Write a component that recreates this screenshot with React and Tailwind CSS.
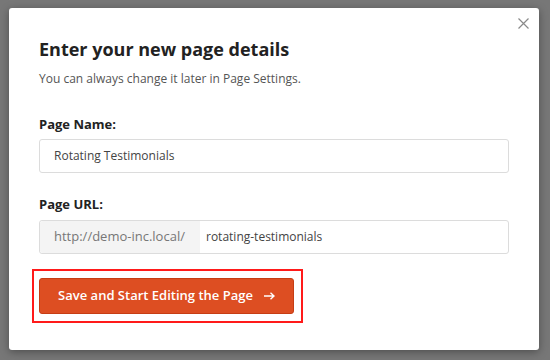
import React from 'react';

const App = () => {
    return (
        <div
            className="w-[550px] h-[360px] bg-[#777777] overflow-hidden pt-[8px] pl-[9px]"
            style={{ fontFamily: '"Open Sans", "Liberation Sans", sans-serif' }}
        >
            <div className="relative w-[530px] h-[342px] bg-white rounded-[3px] shadow-[0_2px_8px_rgba(0,0,0,0.35)] pt-[29px] px-[30px]">
                <button className="absolute right-[10px] top-[10px] text-[#8a8a8a]">
                    <svg width="11" height="11" viewBox="0 0 11 11" fill="none" stroke="currentColor" strokeWidth="1.2" className="block">
                        <path d="M0.5 0.5L10.5 10.5M10.5 0.5L0.5 10.5" />
                    </svg>
                </button>

                <h1 className="text-[18px] leading-[24px] font-bold text-[#222]">
                    Enter your new page details
                </h1>
                <p className="text-[12px] leading-[18px] text-[#555] mt-[9px]">
                    You can always change it later in Page Settings.
                </p>

                <label className="block text-[13px] leading-[18px] font-bold text-[#222] mt-[27px]">
                    Page Name:
                </label>
                <div className="mt-[6px] w-[470px] h-[34px] border border-[#dcdcdc] rounded-[3px] flex items-center px-[14px] text-[12px] text-[#444]">
                    Rotating Testimonials
                </div>

                <label className="block text-[13px] leading-[18px] font-bold text-[#222] mt-[22px]">
                    Page URL:
                </label>
                <div className="mt-[7px] w-[470px] h-[34px] border border-[#dcdcdc] rounded-[3px] flex">
                    <div className="w-[160px] bg-[#f4f4f4] flex items-center px-[14px] text-[13px] text-[#777] rounded-l-[3px]">
                        http://demo-inc.local/
                    </div>
                    <div className="flex items-center px-[6px] text-[12px] text-[#444]">
                        rotating-testimonials
                    </div>
                </div>

                <div className="mt-[15px] ml-[-7px] w-[271px] border-2 border-[#ff1a1a] pt-[7px] pb-[7px] pl-[5px] pr-[6px]">
                    <button className="w-[255px] h-[36px] bg-[#dd4e22] border border-[#c63d14] rounded-[3px] text-white text-[13px] font-semibold flex items-center justify-center gap-[11px]">
                        <span>Save and Start Editing the Page</span>
                        <svg width="11" height="8" viewBox="0 0 11 8" fill="none" stroke="currentColor" strokeWidth="1.4" className="block">
                            <path d="M0 4H10M6.5 0.8L10 4L6.5 7.2" />
                        </svg>
                    </button>
                </div>
            </div>
        </div>
    );
};

export default App;
